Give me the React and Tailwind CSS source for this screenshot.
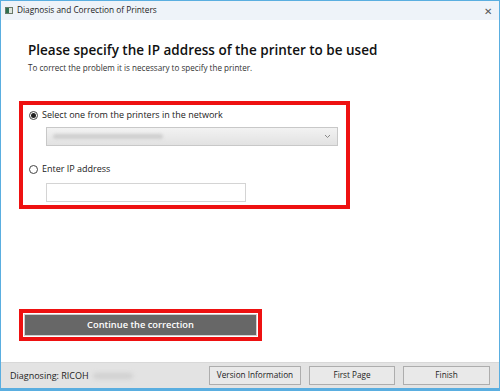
export default function App() {
  return (
    <div className="w-[500px] h-[391px] bg-white border border-[#5aaee0] border-t-0 flex flex-col overflow-hidden" style={{ fontFamily: '"Open Sans", "Noto Sans", sans-serif' }}>
      <div className="h-[20px] bg-[#eef3f9] border-t border-[#5aaee0] flex items-center pl-[4px] shrink-0">
        <div className="w-[8px] h-[7px] border border-[#6a7a6a] bg-[#dfe6df] flex">
          <div className="w-[3px] h-full bg-[#2f6f4f]"></div>
        </div>
        <span className="ml-[4px] text-[8.3px] text-[#222]">Diagnosis and Correction of Printers</span>
        <span className="ml-auto mr-[7px] text-[10px] text-[#555] leading-none">✕</span>
      </div>
      <div className="flex-1 flex flex-col px-[18px]">
        <div className="pl-[9px] pt-[20px]">
          <div className="text-[13.5px] font-semibold text-[#111] leading-[20px]">Please specify the IP address of the printer to be used</div>
          <div className="text-[8.1px] text-[#333] leading-[12px] mt-[2px]">To correct the problem it is necessary to specify the printer.</div>
        </div>
        <div className="mt-[27px] w-[331px] h-[108px] border-[4px] border-[#ee1111] pt-[2px] pl-[6px]">
          <div className="flex items-center h-[16px]">
            <div className="w-[9px] h-[9px] rounded-full border border-[#444] flex items-center justify-center">
              <div className="w-[5px] h-[5px] rounded-full bg-[#222]"></div>
            </div>
            <span className="ml-[4px] text-[9px] text-[#222]">Select one from the printers in the network</span>
          </div>
          <div className="ml-[17px] mt-[4px] w-[292px] h-[19px] border border-[#c8c8c8] bg-gradient-to-b from-[#f2f2f2] to-[#e2e2e2] flex items-center px-[6px]">
            <div className="w-[110px] h-[5px] rounded-full bg-[#cfcfcf] blur-[1.5px]"></div>
            <svg className="ml-auto" width="7" height="5" viewBox="0 0 7 5"><path d="M1 1 L3.5 3.5 L6 1" stroke="#888" strokeWidth="1" fill="none" /></svg>
          </div>
          <div className="flex items-center h-[16px] mt-[15px]">
            <div className="w-[9px] h-[9px] rounded-full border border-[#444]"></div>
            <span className="ml-[4px] text-[9px] text-[#222]">Enter IP address</span>
          </div>
          <div className="ml-[17px] mt-[6px] w-[200px] h-[19px] border border-[#d4d4d4] bg-white"></div>
        </div>
        <div className="flex-1"></div>
        <div className="w-[243px] h-[32px] border-[4px] border-[#ee1111] p-[1px] mb-[21px]">
          <div className="w-full h-full bg-[#676767] border border-[#cfcfcf] flex items-center justify-center text-white text-[9.3px] font-semibold">Continue the correction</div>
        </div>
      </div>
      <div className="h-[28px] bg-[#e3e3e3] border-t border-[#d8d8d8] flex items-center pl-[9px] pr-[9px] shrink-0 border-b-[2px] border-b-[#5aaee0]">
        <span className="text-[9px] text-[#222]">Diagnosing: RICOH</span>
        <div className="ml-[4px] w-[40px] h-[6px] bg-[#d0d0d0] rounded-full blur-[2px]"></div>
        <div className="ml-auto flex gap-[8px]">
          <div className="w-[92px] h-[19px] border border-[#adadad] bg-[#e9e9e9] flex items-center justify-center text-[8.2px] text-[#222]">Version Information</div>
          <div className="w-[86px] h-[19px] border border-[#adadad] bg-[#e9e9e9] flex items-center justify-center text-[8.2px] text-[#222]">First Page</div>
          <div className="w-[87px] h-[19px] border border-[#adadad] bg-[#e9e9e9] flex items-center justify-center text-[8.2px] text-[#222]">Finish</div>
        </div>
      </div>
    </div>
  );
}
